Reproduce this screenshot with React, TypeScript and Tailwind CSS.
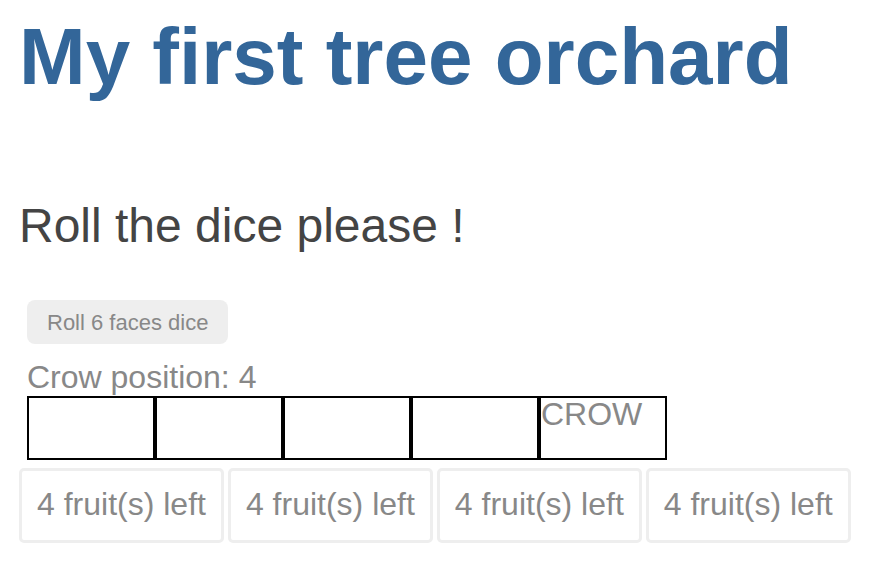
export const CrowTrack = ({position, length}: {position: number, length: number}) => {
    return (
        <div className="flex">
            {
                Array.from({length}).map((_, index) => (
                    <div key={`cell-${index}`} className="w-[128px] h-[64px] border-2 border-black text-[32px] leading-[32px] text-[#888]">
                        {index === position ? 'CROW' : ''}
                    </div>
                ))
            }
        </div>
    )
}

export const FruitTree = ({fruits}: {fruits: number}) => {
    return (
        <div className="border-[3px] border-[#eee] rounded-[5px] px-[15px] pt-[15px] pb-[17px] text-[32px] leading-[37px] text-[#888] whitespace-nowrap">
            {fruits} fruit(s) left
        </div>
    )
}

export default function App() {
    const trees = [4, 4, 4, 4];

    return (
        <div className="px-[19px] font-['Liberation_Sans',Arial,sans-serif]">
            <h1 className="mt-[11px] text-[80px] leading-[92px] font-bold text-[#336699]">
                My first tree orchard
            </h1>
            <h2 className="mt-[95px] text-[48px] leading-[56px] text-[#444]">
                Roll the dice please !
            </h2>
            <div className="ml-[8px] mt-[46px]">
                <button className="h-[44px] px-5 rounded-lg bg-[#eee] text-[22px] text-[#888]">
                    Roll 6 faces dice
                </button>
                <div className="mt-[15px] text-[32px] leading-[37px] text-[#888]">
                    Crow position: 4
                </div>
                <CrowTrack position={4} length={5} />
            </div>
            <div className="flex gap-1 mt-[8px]">
                {
                    trees.map((fruits, index) => <FruitTree key={`tree-${index}`} fruits={fruits} />)
                }
            </div>
        </div>
    )
}
